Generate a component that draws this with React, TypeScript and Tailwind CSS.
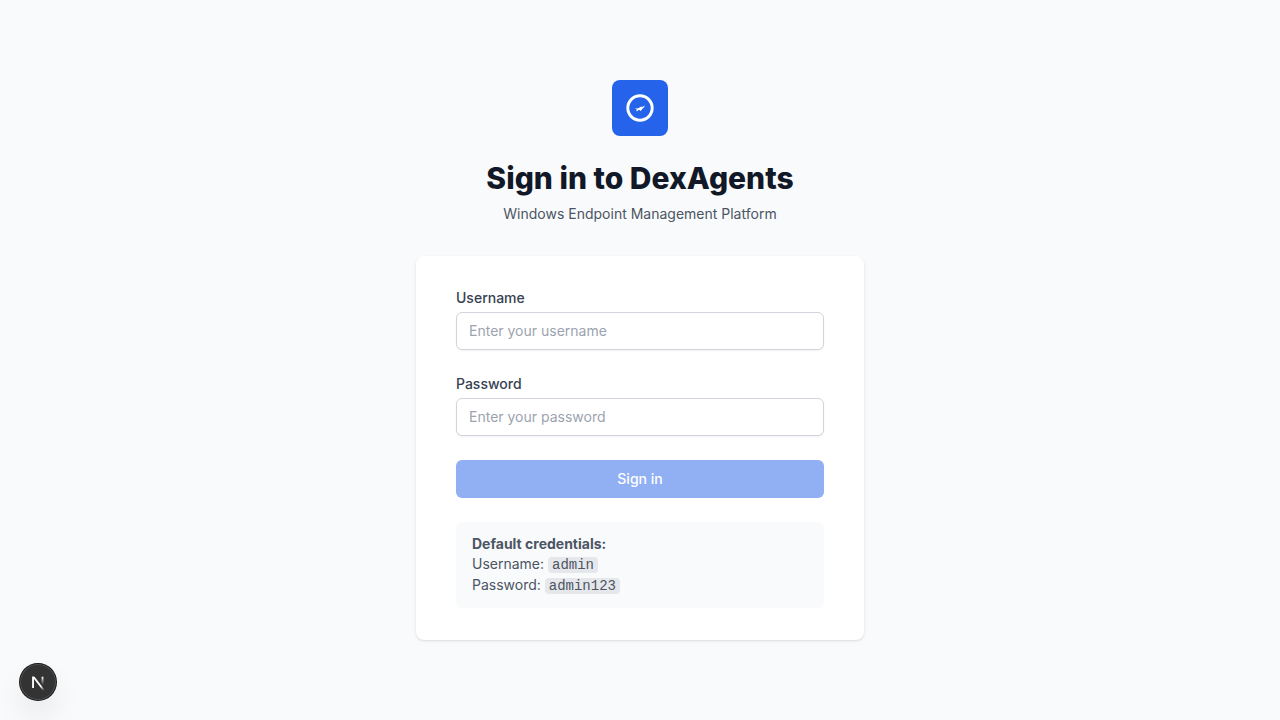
import { useState } from "react";

function Logo() {
  return (
    <div className="flex size-14 items-center justify-center rounded-lg bg-[#2563eb]">
      <svg className="size-8" viewBox="0 0 24 24" fill="none" stroke="white" strokeWidth="2.2" aria-hidden="true">
        <circle cx="12" cy="12" r="9.15" />
        <path d="M8.3 12.2 L10.3 12.3 L12 11.5 L13.3 10.9 L13.7 11.3 L15.7 10.1 L14.9 11.7 L13.8 12.6 L13 13.6 L12.3 14.2 L11.5 13.4 L10.6 13.6 L9.9 14.4 L9.2 14.3 L9.6 13.2 Z" fill="white" stroke="none" />
      </svg>
    </div>
  );
}

function DevBadge() {
  return (
    <button
      type="button"
      aria-label="Open dev tools"
      className="fixed bottom-5 left-5 flex size-9 items-center justify-center rounded-full bg-[#333333] shadow-[0_0_0_1px_#171717,inset_0_0_0_1px_rgba(255,255,255,0.14),0_16px_32px_-8px_rgba(0,0,0,0.24)]"
    >
      <svg className="size-10 shrink-0" viewBox="0 0 40 40" fill="none" aria-hidden="true">
        <defs>
          <linearGradient id="diagonal" x1="9.95" y1="11.12" x2="15.48" y2="17.97" gradientUnits="userSpaceOnUse">
            <stop stopColor="white" />
            <stop offset="0.6" stopColor="white" stopOpacity="0" />
            <stop offset="1" stopColor="white" stopOpacity="0" />
          </linearGradient>
          <linearGradient id="stem" x1="11.82" y1="1.4" x2="11.79" y2="9.63" gradientUnits="userSpaceOnUse">
            <stop stopColor="white" />
            <stop offset="1" stopColor="white" stopOpacity="0" />
          </linearGradient>
          <clipPath id="cap">
            <rect x="0" y="1.3" width="16" height="16" />
          </clipPath>
        </defs>
        <g transform="translate(12.7 13.3)" strokeWidth="1.86" clipPath="url(#cap)">
          <path d="M13.3 15.2 L2.34 1 V12.6" stroke="url(#diagonal)" />
          <path d="M11.825 1.3 V13.1" stroke="url(#stem)" />
        </g>
      </svg>
    </button>
  );
}

type FieldProps = {
  id: string;
  label: string;
  type: string;
  placeholder: string;
  value: string;
  onChange: (value: string) => void;
};

function Field({ id, label, type, placeholder, value, onChange }: FieldProps) {
  return (
    <div>
      <label htmlFor={id} className="block text-sm font-medium text-[#374151]">
        {label}
      </label>
      <input
        id={id}
        name={id}
        type={type}
        placeholder={placeholder}
        value={value}
        onChange={(event) => onChange(event.target.value)}
        className="mt-1 block w-full rounded-md border border-[#d1d5db] bg-white px-3 py-2 text-sm text-[#111827] shadow-xs placeholder:text-[#9ca3af] focus:border-[#3b82f6] focus:outline-none"
      />
    </div>
  );
}

export default function App() {
  const [username, setUsername] = useState("");
  const [password, setPassword] = useState("");

  return (
    <div className="flex min-h-screen flex-col justify-center bg-[#f9fafb] px-4 py-12 font-['Inter',sans-serif] text-[#4b5563] antialiased">
      <header className="flex flex-col items-center text-center">
        <Logo />
        <h1 className="mt-6 text-3xl font-extrabold text-[#111827]">Sign in to DexAgents</h1>
        <p className="mt-2 text-sm">Windows Endpoint Management Platform</p>
      </header>

      <main className="mx-auto mt-8 w-full max-w-md rounded-lg bg-white px-4 py-8 shadow-sm sm:px-10">
        <form className="space-y-6" onSubmit={(event) => event.preventDefault()}>
          <Field id="username" label="Username" type="text" placeholder="Enter your username" value={username} onChange={setUsername} />
          <Field id="password" label="Password" type="password" placeholder="Enter your password" value={password} onChange={setPassword} />
          <button
            type="submit"
            disabled={!username || !password}
            className="flex w-full justify-center rounded-md border border-transparent bg-[#2563eb] px-4 py-2 text-sm font-medium text-white disabled:opacity-50"
          >
            Sign in
          </button>
        </form>

        <div className="mt-6 rounded-md bg-[#f9fafb] px-4 py-3 text-sm">
          <p className="font-bold">Default credentials:</p>
          <p>
            Username: <code className="rounded-sm bg-[#e5e7eb] px-1 font-['Liberation_Mono',monospace]">admin</code>
          </p>
          <p>
            Password: <code className="rounded-sm bg-[#e5e7eb] px-1 font-['Liberation_Mono',monospace]">admin123</code>
          </p>
        </div>
      </main>

      <DevBadge />
    </div>
  );
}
